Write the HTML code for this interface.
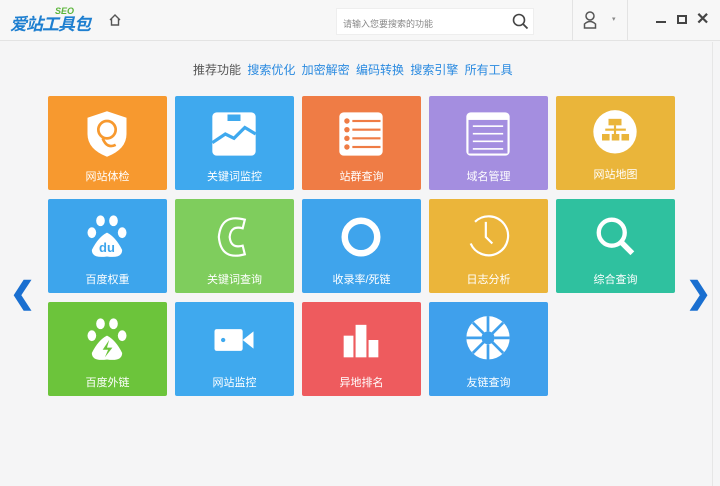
<!DOCTYPE html>
<html><head><meta charset="utf-8"><style>
*{margin:0;padding:0;box-sizing:border-box}
body{width:720px;height:486px;background:#f5f5f6;font-family:"Liberation Sans","Noto Sans CJK SC",sans-serif;position:relative;overflow:hidden}
.hdr{position:absolute;left:0;top:0;width:720px;height:41px;background:#f7f7f7;border-bottom:1px solid #e3e3e3}
.logo{position:absolute;left:10px;top:10px;font-size:17px;font-weight:bold;color:#1e7fd0;font-style:italic;letter-spacing:-1px}
.seo{position:absolute;left:55px;top:6px;font-size:9px;color:#5bb53a;font-weight:bold;font-style:italic}
.search{position:absolute;left:336px;top:8px;width:198px;height:27px;background:#fff;border:1px solid #eee;font-size:9px;color:#888;padding:8px 0 0 6px}
.tabs{position:absolute;top:61px;left:193px;font-size:12px;color:#2a8ae0;word-spacing:3px}
.tabs b{color:#555;font-weight:normal}
.t{position:absolute;width:119px;height:94px;border-radius:2px;color:#fff;font-size:11px;text-align:center}
.t span{position:absolute;left:0;right:0;top:72px}
.t svg{position:absolute;left:35px;top:12px;width:48px;height:52px}
.arr{position:absolute;top:276px;font-size:30px;color:#1a6fd0;font-weight:bold}
</style></head><body>
<div class="hdr">
<div class="logo">爱站工具包</div>
<div class="seo">SEO</div>
<svg style="position:absolute;left:108px;top:13px" width="14" height="14" viewBox="0 0 14 14"><path d="M2 7 L7 2 L12 7 M3.5 6 V12 H10.5 V6" fill="none" stroke="#555" stroke-width="1.4"/></svg>
<div class="search">请输入您要搜索的功能</div>
<svg style="position:absolute;left:512px;top:13px" width="17" height="17" viewBox="0 0 17 17"><circle cx="7" cy="7" r="5.5" fill="none" stroke="#444" stroke-width="1.6"/><path d="M11 11 L15.5 15.5" stroke="#444" stroke-width="1.8"/></svg>
<div style="position:absolute;left:572px;top:0;width:1px;height:41px;background:#e3e3e3"></div>
<svg style="position:absolute;left:583px;top:11px" width="14" height="18" viewBox="0 0 14 18"><circle cx="7" cy="5" r="4" fill="none" stroke="#555" stroke-width="1.5"/><path d="M1.5 17 V13 Q7 8 12.5 13 V17 Z" fill="none" stroke="#555" stroke-width="1.5"/></svg>
<div style="position:absolute;left:612px;top:15px;font-size:7px;color:#888">▾</div>
<div style="position:absolute;left:627px;top:0;width:1px;height:41px;background:#e3e3e3"></div>
<div style="position:absolute;left:656px;top:21px;width:10px;height:2px;background:#444"></div>
<div style="position:absolute;left:677px;top:15px;width:10px;height:9px;border:2px solid #444"></div>
<div style="position:absolute;left:696px;top:9px;font-size:16px;font-weight:bold;color:#444">✕</div>
</div>
<div class="tabs"><b>推荐功能</b> 搜索优化 加密解密 编码转换 搜索引擎 所有工具</div>
<div style="position:absolute;left:712px;top:42px;width:1px;height:444px;background:#e6e6e6"></div>

<div class="t" style="left:48px;top:96px;background:#f7992f"><svg viewBox="0 0 44 48"><path d="M22 3 L40 9 V24 Q40 38 22 45 Q4 38 4 24 V9 Z" fill="#fff"/><circle cx="22" cy="20" r="8" fill="none" stroke="#f7992f" stroke-width="2.5"/><path d="M18 28 Q22 38 30 34" fill="none" stroke="#f7992f" stroke-width="2.5"/></svg><span>网站体检</span></div>
<div class="t" style="left:175px;top:96px;background:#3fa9ee"><svg viewBox="0 0 44 48"><rect x="2" y="4" width="40" height="40" rx="4" fill="#fff"/><path d="M2 32 L14 24 L22 28 L32 18 L42 24" fill="none" stroke="#3fa9ee" stroke-width="3"/><rect x="16" y="6" width="12" height="6" fill="#3fa9ee"/></svg><span>关键词监控</span></div>
<div class="t" style="left:302px;top:96px;background:#ef7c45"><svg viewBox="0 0 44 48"><rect x="2" y="4" width="40" height="40" rx="4" fill="#fff"/><g fill="#ef7c45"><circle cx="9" cy="12" r="2.5"/><circle cx="9" cy="20" r="2.5"/><circle cx="9" cy="28" r="2.5"/><circle cx="9" cy="36" r="2.5"/><rect x="14" y="11" width="26" height="2"/><rect x="14" y="19" width="26" height="2"/><rect x="14" y="27" width="26" height="2"/><rect x="14" y="35" width="26" height="2"/></g></svg><span>站群查询</span></div>
<div class="t" style="left:429px;top:96px;background:#a48ee0"><svg viewBox="0 0 44 48"><rect x="2" y="4" width="40" height="40" rx="4" fill="#fff"/><rect x="4" y="11" width="36" height="31" fill="#a48ee0"/><g fill="#fff"><rect x="8" y="16" width="28" height="1.5"/><rect x="8" y="23" width="28" height="1.5"/><rect x="8" y="30" width="28" height="1.5"/><rect x="8" y="37" width="28" height="1.5"/></g></svg><span>域名管理</span></div>
<div class="t" style="left:556px;top:96px;background:#eab53a"><svg viewBox="0 0 44 48"><circle cx="22" cy="22" r="20" fill="#fff"/><g fill="#eab53a"><rect x="16" y="10" width="12" height="6"/><rect x="10" y="24" width="7" height="6"/><rect x="19" y="24" width="7" height="6"/><rect x="28" y="24" width="7" height="6"/><rect x="13" y="19" width="19" height="2"/><rect x="21" y="16" width="2" height="8"/></g></svg><span style="top:70px">网站地图</span></div>

<div class="t" style="left:48px;top:199px;background:#3da5ec"><svg viewBox="0 0 44 48"><g fill="#fff"><ellipse cx="8" cy="20" rx="4" ry="5"/><ellipse cx="16" cy="9" rx="4" ry="5"/><ellipse cx="28" cy="9" rx="4" ry="5"/><ellipse cx="36" cy="20" rx="4" ry="5"/><path d="M22 20 Q30 24 36 36 Q36 44 22 42 Q8 44 8 36 Q14 24 22 20Z"/></g><text x="22" y="38" text-anchor="middle" font-size="12" font-weight="bold" fill="#3da5ec" font-family="Liberation Sans">du</text></svg><span>百度权重</span></div>
<div class="t" style="left:175px;top:199px;background:#7fcd5d"><svg viewBox="0 0 44 48"><path d="M32 8 Q10 2 8 24 Q10 46 32 40 L30 32 Q19 35 18 24 Q19 13 30 16 Z" fill="none" stroke="#fff" stroke-width="2"/></svg><span>关键词查询</span></div>
<div class="t" style="left:302px;top:199px;background:#3fa4ec"><svg viewBox="0 0 44 48"><circle cx="22" cy="24" r="15" fill="none" stroke="#fff" stroke-width="6"/></svg><span>收录率/死链</span></div>
<div class="t" style="left:429px;top:199px;background:#ebb53a"><svg viewBox="0 0 44 48"><path d="M6 30 A18 18 0 1 0 10 10" fill="none" stroke="#fff" stroke-width="2"/><path d="M20 10 V24 L26 30" fill="none" stroke="#fff" stroke-width="2"/></svg><span>日志分析</span></div>
<div class="t" style="left:556px;top:199px;background:#2fc19f"><svg viewBox="0 0 44 48"><circle cx="19" cy="20" r="12" fill="none" stroke="#fff" stroke-width="4"/><path d="M28 29 L38 39" stroke="#fff" stroke-width="5"/></svg><span>综合查询</span></div>

<div class="t" style="left:48px;top:302px;background:#6cc43b"><svg viewBox="0 0 44 48"><g fill="#fff"><ellipse cx="8" cy="20" rx="4" ry="5"/><ellipse cx="16" cy="9" rx="4" ry="5"/><ellipse cx="28" cy="9" rx="4" ry="5"/><ellipse cx="36" cy="20" rx="4" ry="5"/><path d="M22 20 Q30 24 36 36 Q36 44 22 42 Q8 44 8 36 Q14 24 22 20Z"/></g><path d="M24 24 L18 33 H23 L20 40 L27 31 H22 Z" fill="#6cc43b"/></svg><span>百度外链</span></div>
<div class="t" style="left:175px;top:302px;background:#3fa9ee"><svg viewBox="0 0 44 48"><rect x="4" y="14" width="26" height="20" rx="2" fill="#fff"/><path d="M30 24 L40 16 V32Z" fill="#fff"/><circle cx="12" cy="24" r="2" fill="#3fa9ee"/></svg><span>网站监控</span></div>
<div class="t" style="left:302px;top:302px;background:#ee5b5e"><svg viewBox="0 0 44 48"><g fill="#fff"><rect x="6" y="20" width="9" height="20"/><rect x="17" y="10" width="10" height="30"/><rect x="29" y="24" width="9" height="16"/></g></svg><span>异地排名</span></div>
<div class="t" style="left:429px;top:302px;background:#3fa0ec"><svg viewBox="0 0 44 48"><circle cx="22" cy="22" r="20" fill="#fff"/><circle cx="22" cy="22" r="6" fill="#3fa0ec"/><g stroke="#3fa0ec" stroke-width="2.5"><path d="M22 2V16M22 28V42M2 22H16M28 22H42M8 8L18 18M26 26L36 36M36 8L26 18M18 26L8 36"/></g></svg><span>友链查询</span></div>

<div class="arr" style="left:10px">❮</div>
<div class="arr" style="left:686px">❯</div>
</body></html>
